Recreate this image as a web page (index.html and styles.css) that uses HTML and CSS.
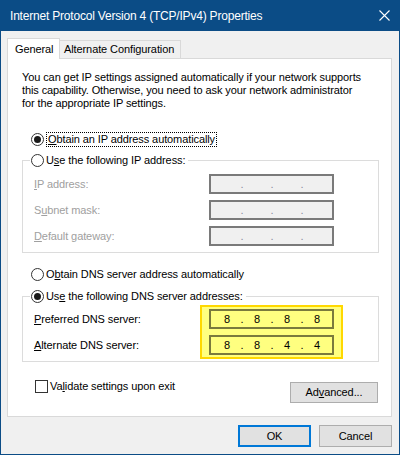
FILE: index.html
```html
<!DOCTYPE html>
<html lang="en">
<head>
    <meta charset="UTF-8" />
    <title>Internet Protocol Version 4 (TCP/IPv4) Properties</title>
    <link rel="stylesheet" href="styles.css">
</head>
<body>

    <div class="window">
        <div class="titlebar">
            <span class="title">Internet Protocol Version 4 (TCP/IPv4) Properties</span>
            <svg class="close" width="11" height="11" viewBox="0 0 11 11">
                <path d="M0.5 0.5 L10.5 10.5 M10.5 0.5 L0.5 10.5" stroke="#fff" stroke-width="1.1" fill="none" />
            </svg>
        </div>

        <div class="client">
            <div class="tabs">
                <div class="tab active">General</div>
                <div class="tab other">Alternate Configuration</div>
            </div>

            <div class="panel">
                <p class="intro">You can get IP settings assigned automatically if your network supports<br>this capability. Otherwise, you need to ask your network administrator<br>for the appropriate IP settings.</p>

                <div class="opt first">
                    <span class="radio on"></span>
                    <span class="lbl focus"><u>O</u>btain an IP address automatically</span>
                </div>

                <fieldset class="group ip">
                    <legend>
                        <div class="choice"><span class="radio"></span><span>U<u>s</u>e the following IP address:</span></div>
                    </legend>
                    <div class="fields">
                        <span class="disabled"><u>I</u>P address:</span>
                        <div class="ipbox off"><span class="seg"></span><span class="dot">.</span><span class="seg"></span><span class="dot">.</span><span class="seg"></span><span class="dot">.</span><span class="seg"></span></div>
                        <span class="disabled">S<u>u</u>bnet mask:</span>
                        <div class="ipbox off"><span class="seg"></span><span class="dot">.</span><span class="seg"></span><span class="dot">.</span><span class="seg"></span><span class="dot">.</span><span class="seg"></span></div>
                        <span class="disabled"><u>D</u>efault gateway:</span>
                        <div class="ipbox off"><span class="seg"></span><span class="dot">.</span><span class="seg"></span><span class="dot">.</span><span class="seg"></span><span class="dot">.</span><span class="seg"></span></div>
                    </div>
                </fieldset>

                <div class="opt dns-auto">
                    <span class="radio"></span>
                    <span>O<u>b</u>tain DNS server address automatically</span>
                </div>

                <fieldset class="group dns">
                    <legend>
                        <div class="choice"><span class="radio on"></span><span>Us<u>e</u> the following DNS server addresses:</span></div>
                    </legend>
                    <div class="dns-body">
                        <div class="dns-labels">
                            <span><u>P</u>referred DNS server:</span>
                            <span><u>A</u>lternate DNS server:</span>
                        </div>
                        <div class="highlight">
                            <div class="ipbox"><span class="seg">8</span><span class="dot">.</span><span class="seg">8</span><span class="dot">.</span><span class="seg">8</span><span class="dot">.</span><span class="seg">8</span></div>
                            <div class="ipbox"><span class="seg">8</span><span class="dot">.</span><span class="seg">8</span><span class="dot">.</span><span class="seg">4</span><span class="dot">.</span><span class="seg">4</span></div>
                        </div>
                    </div>
                </fieldset>

                <div class="check-row">
                    <div class="check"><span class="box"></span><span>Va<u>l</u>idate settings upon exit</span></div>
                    <button class="btn advanced">Ad<u>v</u>anced...</button>
                </div>
            </div>

            <div class="buttons">
                <button class="btn ok">OK</button>
                <button class="btn cancel">Cancel</button>
            </div>
        </div>
    </div>

</body>
</html>
```

FILE: styles.css
```css
body {
    margin: 0;
    font-family: "Liberation Sans", Arial, sans-serif;
    font-size: 11px;
    line-height: 13px;
    letter-spacing: -0.1px;
    color: #000;
}

.window {
    width: 400px;
    height: 455px;
    box-sizing: border-box;
    border: 1px solid #0b4c86;
    background: #f0f0f0;
    display: flex;
    flex-direction: column;
}

.titlebar {
    height: 30px;
    flex: none;
    background: #0b4c86;
    color: #fff;
    display: flex;
    align-items: center;
    padding: 0 9px 0 9px;
}

.title {
    font-size: 12px;
    letter-spacing: -0.2px;
}

.close {
    margin-left: auto;
    margin-bottom: 2px;
}

.client {
    flex: 1;
    display: flex;
    flex-direction: column;
    padding: 7px 7px 0 6px;
}

.tabs {
    display: flex;
    align-items: flex-end;
    height: 20px;
}

.tab {
    box-sizing: border-box;
    height: 18px;
    border: 1px solid #d9d9d9;
    border-bottom: none;
    display: flex;
    align-items: center;
}

.tab.active {
    width: 53px;
    height: 21px;
    padding-left: 7px;
    background: #fff;
    margin-bottom: -1px;
    position: relative;
    z-index: 1;
}

.tab.other {
    width: 121px;
    border-left: none;
    padding-left: 4px;
    background: #f0f0f0;
}

.panel {
    box-sizing: border-box;
    height: 359px;
    background: #fff;
    border: 1px solid #d9d9d9;
    padding: 12px 12px 0 14px;
}

.intro {
    margin: 0;
}

.opt {
    display: flex;
    align-items: center;
    height: 16px;
    padding-left: 9px;
}

.opt.first {
    margin-top: 21px;
}

.opt.dns-auto {
    margin-top: 13px;
}

.radio {
    flex: none;
    width: 13px;
    height: 13px;
    box-sizing: border-box;
    border: 1px solid #333;
    border-radius: 50%;
    background: #fff;
    margin-right: 2px;
    display: flex;
    align-items: center;
    justify-content: center;
}

.radio.on::after {
    content: "";
    width: 7px;
    height: 7px;
    border-radius: 50%;
    background: #1a1a1a;
}

.lbl.focus {
    border: 1px dotted #000;
    padding: 0 1px;
}

.group {
    margin: 5px 0 0;
    padding: 6px 0 6px 7px;
    border: 1px solid #dcdcdc;
    min-width: 0;
}

.group legend {
    padding: 0 3px 0 1px;
}

.choice {
    display: flex;
    align-items: center;
    height: 16px;
}

.fields {
    display: grid;
    grid-template-columns: 175px 125px;
    grid-auto-rows: 20px;
    row-gap: 6px;
    align-items: center;
    padding-left: 4px;
}

.disabled {
    color: #a0a0a0;
}

.ipbox {
    box-sizing: border-box;
    width: 125px;
    height: 20px;
    border: 2px solid #7a7a7a;
    display: flex;
    align-items: center;
    padding-left: 4px;
}

.ipbox .seg {
    width: 24px;
    text-align: center;
}

.ipbox .dot {
    width: 6px;
    text-align: center;
}

.ipbox.off {
    background: #f0f0f0;
}

.ipbox.off .dot {
    color: #8a8a9e;
}

.group.dns {
    margin-top: 6px;
    padding: 1px 0 2px 7px;
}

.dns-body {
    display: flex;
    padding-left: 4px;
}

.dns-labels {
    width: 166px;
    display: flex;
    flex-direction: column;
    gap: 6px;
    padding-top: 4px;
}

.dns-labels span {
    height: 20px;
    display: flex;
    align-items: center;
}

.highlight {
    display: flex;
    flex-direction: column;
    gap: 6px;
    padding: 2px 7px;
    border: 2px solid #ffd800;
    background: #ffff80;
}

.highlight .ipbox {
    border-color: #7a7a3d;
}

.check-row {
    display: flex;
    align-items: flex-start;
    margin-top: 18px;
    padding-left: 13px;
}

.check {
    display: flex;
    align-items: center;
    height: 13px;
}

.box {
    width: 13px;
    height: 13px;
    box-sizing: border-box;
    border: 1px solid #333;
    background: #fff;
    margin-right: 2px;
}

.btn {
    box-sizing: border-box;
    height: 21px;
    padding: 0;
    border: 1px solid #adadad;
    background: #e1e1e1;
    color: #000;
    font: inherit;
    letter-spacing: inherit;
}

.advanced {
    width: 88px;
    margin: 2px 1px 0 auto;
}

.buttons {
    display: flex;
    justify-content: flex-end;
    gap: 8px;
    margin-top: 8px;
}

.ok,
.cancel {
    width: 73px;
    height: 22px;
}

.ok {
    border: 2px solid #0078d7;
}
```
